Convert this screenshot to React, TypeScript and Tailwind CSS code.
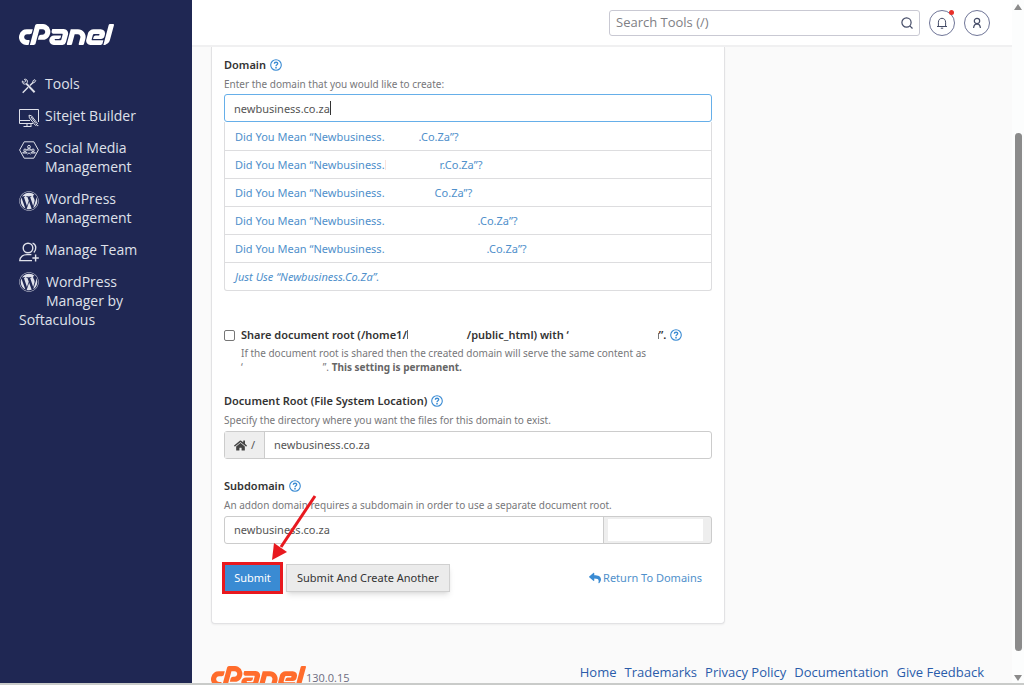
import { useState } from "react";
import type { ReactNode } from "react";
import { FaHome, FaReply, FaWordpress } from "react-icons/fa";
import { SiCpanel } from "react-icons/si";

const suggestions = [
  { hidden: "w-[34px]", end: ".Co.Za”?" },
  { hidden: "w-[55px] h-2.5 border-l border-[#fbe3dc]", end: "r.Co.Za”?" },
  { hidden: "w-[50px]", end: "Co.Za”?" },
  { hidden: "w-[93px]", end: ".Co.Za”?" },
  { hidden: "w-[102px]", end: ".Co.Za”?" },
];

const footerLinks = [
  "Home",
  "Trademarks",
  "Privacy Policy",
  "Documentation",
  "Give Feedback",
];

function ToolsIcon() {
  return (
    <svg width="18" height="18" viewBox="0 0 20 20" fill="none" stroke="currentColor">
      <path d="M3 17.4L9 11.5M11 9.5L14.5 6" strokeWidth="1.6" />
      <path d="M14 6.2L14.6 4L16.6 3L17.4 3.8L16.4 5.8L14.4 6.6" strokeWidth="1.1" />
      <path d="M7 7.4L16.2 17" strokeWidth="2.2" />
      <path d="M2.6 4.4L4.6 6.2L6.4 4.4L4.8 2.6C7 1.8 9 3.8 8 6.2L6.4 7.8C4.2 8.6 2 6.8 2.6 4.4Z" strokeWidth="1.1" />
    </svg>
  );
}

function SitejetIcon() {
  return (
    <svg width="20" height="20" viewBox="0 0 20 20" fill="none" stroke="currentColor">
      <path d="M14 15.5H.5V1.5H19.5V14" />
      <path d="M.5 12.5H11M8 15.5V18M4.5 18.5H12.5M12 15.5V18" />
      <path d="M10 7.2L12.5 7.8L18.6 15.6L16.4 17.4L10.4 9.8Z" />
      <path d="M12 9L17 15.6M17.6 17.6H19.4" />
    </svg>
  );
}

function SocialIcon() {
  return (
    <svg width="20" height="20" viewBox="0 0 20 20" fill="none" stroke="currentColor">
      <path d="M5.2 1.8H14.8L19.4 10L14.8 18.2H5.2L.6 10Z" />
      <circle cx="10" cy="6.8" r="1.4" />
      <path d="M7.6 10C7.8 8.2 12.2 8.2 12.4 10Z" />
      <circle cx="6" cy="10.2" r="1.2" />
      <circle cx="14" cy="10.2" r="1.2" />
      <path d="M3.6 13C4 11.4 7.8 11.4 8.2 13ZM11.8 13C12.2 11.4 16 11.4 16.4 13Z" />
      <path d="M8.4 14.2L10 12.8L11.6 14.2" />
    </svg>
  );
}

function TeamIcon() {
  return (
    <svg width="20" height="20" viewBox="0 0 20 20" fill="none" stroke="currentColor" strokeWidth="1.4">
      <circle cx="9" cy="6" r="4.8" />
      <path d="M13.6 1.2C17.4 2.4 17.8 7.6 14.8 10.4" />
      <path d="M13 18.6H.8C.8 14.8 4 12.6 8 12.6H12.4" />
      <path d="M16.6 12.6V19.4M13.4 16H19.8" />
    </svg>
  );
}

function HelpButton({ label }: { label: string }) {
  return (
    <button type="button" aria-label={label} className="shrink-0 text-[#3a8bd3]">
      <svg width="12" height="12" viewBox="0 0 12 12" fill="none" stroke="currentColor">
        <circle cx="6" cy="6" r="5.3" strokeWidth="1.1" />
        <path d="M4.3 4.8C4.3 2.7 7.8 2.8 7.7 4.7C7.6 5.8 6 5.8 6 7.2" strokeWidth="1.3" />
        <path d="M6 8V9.4" strokeWidth="1.5" />
      </svg>
    </button>
  );
}

function Hidden({ className }: { className: string }) {
  return <span className={`inline-block ${className}`} />;
}

function NavItem({ icon, children }: { icon: ReactNode; children: ReactNode }) {
  return (
    <li>
      <a href="#" className="flex gap-1.5">
        <span className="flex h-[19px] w-5 shrink-0 items-center justify-center pt-1">{icon}</span>
        <span>{children}</span>
      </a>
    </li>
  );
}

function Sidebar() {
  return (
    <aside className="w-48 shrink-0 bg-[#1f2753] pl-[19px] pt-6 text-[#dfe1ea]">
      <a href="#" aria-label="cPanel" className="block text-white">
        <SiCpanel viewBox="0 9.4 24 5.2" className="h-[21px] w-[95px]" />
      </a>
      <nav className="mt-[29px] pr-8 text-sm leading-[19px]">
        <ul className="flex flex-col gap-[13px]">
          <NavItem icon={<ToolsIcon />}>Tools</NavItem>
          <NavItem icon={<SitejetIcon />}>Sitejet Builder</NavItem>
          <NavItem icon={<SocialIcon />}>Social Media Management</NavItem>
          <NavItem icon={<FaWordpress size={20} />}>WordPress Management</NavItem>
          <NavItem icon={<TeamIcon />}>Manage Team</NavItem>
          <li>
            <a href="#" className="block">
              <FaWordpress size={20} className="float-left mr-[7px] mb-3" />
              WordPress
              <br />
              Manager by
              <br />
              Softaculous
            </a>
          </li>
        </ul>
      </nav>
    </aside>
  );
}

function Header() {
  return (
    <header className="flex h-[47px] shrink-0 items-center justify-end gap-[9px] border-b-2 border-[#f0f0f1] bg-white pr-[22px]">
      <div className="flex h-[26px] w-[311px] items-center rounded-[3px] border border-[#c9c9d3] bg-white px-1.5">
        <input
          type="search"
          aria-label="Search Tools"
          placeholder="Search Tools (/)"
          className="min-w-0 flex-1 bg-transparent text-[13px] text-gray-700 outline-none placeholder:text-[#808085]"
        />
        <button type="button" aria-label="Search" className="text-[#444b66]">
          <svg width="12" height="12" viewBox="0 0 12 12" fill="none" stroke="currentColor" strokeWidth="1.2">
            <circle cx="5.5" cy="5.5" r="4.6" />
            <path d="M8.8 8.8L11.5 11.5" />
          </svg>
        </button>
      </div>
      <button
        type="button"
        aria-label="Notifications"
        className="relative flex h-[26px] w-[26px] items-center justify-center rounded-full border border-[#6f7597] text-[#444b66]"
      >
        <svg width="12" height="12" viewBox="0 0 12 12" fill="none" stroke="currentColor">
          <path d="M1 9.5H11M2.4 9.5V5.2C2.4 0 9.6 0 9.6 5.2V9.5M4.8 11.2H7.2" />
        </svg>
        <span className="absolute -top-px right-0 h-[5px] w-[5px] rounded-full bg-[#e8302a]" />
      </button>
      <button
        type="button"
        aria-label="Account"
        className="flex h-[26px] w-[26px] items-center justify-center rounded-full border border-[#6f7597] text-[#444b66]"
      >
        <svg width="12" height="12" viewBox="0 0 12 12" fill="none" stroke="currentColor" strokeWidth="1.2">
          <circle cx="6" cy="4" r="2.7" />
          <path d="M2.6 11C2.8 8.2 4 7 6 6.8C8 7 9.2 8.2 9.4 11" />
        </svg>
      </button>
    </header>
  );
}

function DomainForm() {
  const [domain, setDomain] = useState("newbusiness.co.za");
  const [root, setRoot] = useState("newbusiness.co.za");
  const [subdomain, setSubdomain] = useState("newbusiness.co.za");

  return (
    <form
      onSubmit={(e) => e.preventDefault()}
      className="w-full max-w-[514px] rounded-b border border-t-0 border-[#e2e2e4] bg-white px-3 pb-[29px] pt-2 font-['Noto_Sans',sans-serif] text-[11px] leading-4 text-[#333] shadow-xs"
    >
      <div className="flex h-5 items-center gap-1">
        <label htmlFor="domain" className="font-semibold">Domain</label>
        <HelpButton label="About domain" />
      </div>
      <p className="h-[19px] text-[10px] leading-[18px] text-[#77777a]">
        Enter the domain that you would like to create:
      </p>
      <div className="relative">
        <input
          id="domain"
          value={domain}
          onChange={(e) => setDomain(e.target.value)}
          autoFocus
          className="block h-7 w-full rounded-[3px] border border-[#66afe9] px-[9px] text-[#555] caret-transparent outline-none"
        />
        {/* Caret, placed after a hidden copy of the value */}
        <div aria-hidden="true" className="pointer-events-none absolute inset-y-0 left-2.5 flex items-center">
          <span className="invisible whitespace-pre">{domain}</span>
          <span className="h-3.5 w-px bg-[#333]" />
        </div>
      </div>
      <ul className="rounded-b-[3px] border border-t-0 border-[#dddddf] pt-px text-[#4f90cb]">
        {suggestions.map((s, i) => (
          <li key={i} className="border-b border-[#dddddf]">
            <button type="button" className="flex h-[27px] w-full items-center px-2.5">
              Did You Mean “Newbusiness.
              <Hidden className={s.hidden} />
              {s.end}
            </button>
          </li>
        ))}
        <li>
          <button type="button" className="flex h-[27px] w-full items-center px-2.5 italic">
            Just Use “Newbusiness.Co.Za”.
          </button>
        </li>
      </ul>

      <div className="mt-[34px] flex gap-1.5">
        <input
          id="share"
          type="checkbox"
          className="mt-[5px] h-[11px] w-[11px] shrink-0 appearance-none rounded-xs border border-[#767676] checked:bg-[#3a8bd3]"
        />
        <div>
          <div className="flex h-5 items-center gap-1">
            <label htmlFor="share" className="whitespace-nowrap font-semibold">
              Share document root (/home1/
              <Hidden className="h-[9px] w-[60px] border-l border-[#666]" />
              /public_html) with ‘
              <Hidden className="h-1.5 w-[90px] border-r border-[#777]" />
              ”.
            </label>
            <HelpButton label="About sharing the document root" />
          </div>
          <p className="pt-px text-[10px] leading-3.5 text-[#77777a]">
            If the document root is shared then the created domain will serve the same content as
            <br />
            ‘<Hidden className="w-20" />
            ”. <b className="font-bold text-[#666]">This setting is permanent.</b>
          </p>
        </div>
      </div>

      <div className="mt-[17px] flex h-5 items-center gap-1">
        <label htmlFor="root" className="font-semibold">Document Root (File System Location)</label>
        <HelpButton label="About document root" />
      </div>
      <p className="h-5 text-[10px] leading-[18px] text-[#77777a]">
        Specify the directory where you want the files for this domain to exist.
      </p>
      <div className="flex h-7 rounded-[3px] border border-[#ccc]">
        <span className="flex w-10 shrink-0 items-center justify-center gap-1 border-r border-[#ccc] bg-[#eee] text-[#555]">
          <FaHome size={13} className="text-[#444]" />/
        </span>
        <input
          id="root"
          value={root}
          onChange={(e) => setRoot(e.target.value)}
          className="min-w-0 flex-1 px-[9px] text-[#555] outline-none"
        />
      </div>

      <div className="mt-[17px] flex h-5 items-center gap-1">
        <label htmlFor="subdomain" className="font-semibold">Subdomain</label>
        <HelpButton label="About subdomain" />
      </div>
      <p className="h-5 text-[10px] leading-[18px] text-[#77777a]">
        An addon domain requires a subdomain in order to use a separate document root.
      </p>
      <div className="flex h-7 rounded-[3px] border border-[#ccc] bg-[#eee]">
        <input
          id="subdomain"
          value={subdomain}
          onChange={(e) => setSubdomain(e.target.value)}
          className="min-w-0 flex-1 rounded-l-[3px] border-r border-[#ccc] bg-white px-[9px] text-[#555] outline-none"
        />
        <span className="w-[107px] shrink-0 py-0.5 pl-1 pr-2">
          <span className="block h-[22px] bg-white" />
        </span>
      </div>

      <div className="-ml-0.5 mt-[18px] flex items-center gap-[3px]">
        <div className="relative">
          <button
            type="submit"
            className="block h-8 w-[61px] border-3 border-[#e8191f] bg-[#3a8bd3] text-white"
          >
            Submit
          </button>
          <svg
            width="50"
            height="68"
            viewBox="0 0 50 68"
            className="pointer-events-none absolute bottom-full left-[49px]"
          >
            <path d="M44 2L10 53" stroke="#e8191f" strokeWidth="3" />
            <path d="M1 66L3 49L16 58Z" fill="#e8191f" />
          </svg>
        </div>
        <button
          type="submit"
          className="h-7 border border-[#d0d0d0] bg-[#ebebeb] px-2.5 shadow-md"
        >
          Submit And Create Another
        </button>
        <a href="#" className="ml-auto flex items-center gap-0.5 pr-2.5 text-[#4f90cb]">
          <FaReply size={12} className="text-[#3a8bd3]" />
          Return To Domains
        </a>
      </div>
    </form>
  );
}

function Footer() {
  return (
    <footer className="mt-auto flex h-6 items-start justify-between pr-2">
      <div className="flex items-start text-[11px] leading-[11px] text-[#6c6c80]">
        <SiCpanel viewBox="0 9.4 24 5.2" aria-label="cPanel" className="mt-[7px] h-[21px] w-[95px] text-[#ff6c2c]" />
        <span className="pt-[13px]">130.0.15</span>
      </div>
      <nav className="flex gap-2 text-[13px] leading-[26px] text-[#2a5caa]">
        {footerLinks.map((link) => (
          <a key={link} href="#">{link}</a>
        ))}
      </nav>
    </footer>
  );
}

function ScrollTrack() {
  return (
    <div aria-hidden="true" className="flex w-3 shrink-0 flex-col items-center bg-[#fcfdfd] pb-0.5 pt-1 text-[#8b8b8b]">
      <svg width="8" height="6" viewBox="0 0 8 6" fill="currentColor">
        <path d="M4 0L8 6H0Z" />
      </svg>
      <div className="flex-[123]" />
      <div className="w-[7px] flex-[517] rounded-full bg-[#8b8b8b]" />
      <div className="flex-[24]" />
      <svg width="8" height="6" viewBox="0 0 8 6" fill="currentColor">
        <path d="M4 6L8 0H0Z" />
      </svg>
    </div>
  );
}

export default function App() {
  return (
    <div className="flex h-screen overflow-hidden border-b-2 border-[#c9cbc9] bg-[#fafafa] font-['Open_Sans',sans-serif]">
      <Sidebar />
      <div className="flex min-w-0 flex-1 flex-col">
        <Header />
        <main className="flex min-h-0 flex-1 flex-col pl-[19px] pr-5">
          <DomainForm />
          <Footer />
        </main>
      </div>
      <ScrollTrack />
    </div>
  );
}
